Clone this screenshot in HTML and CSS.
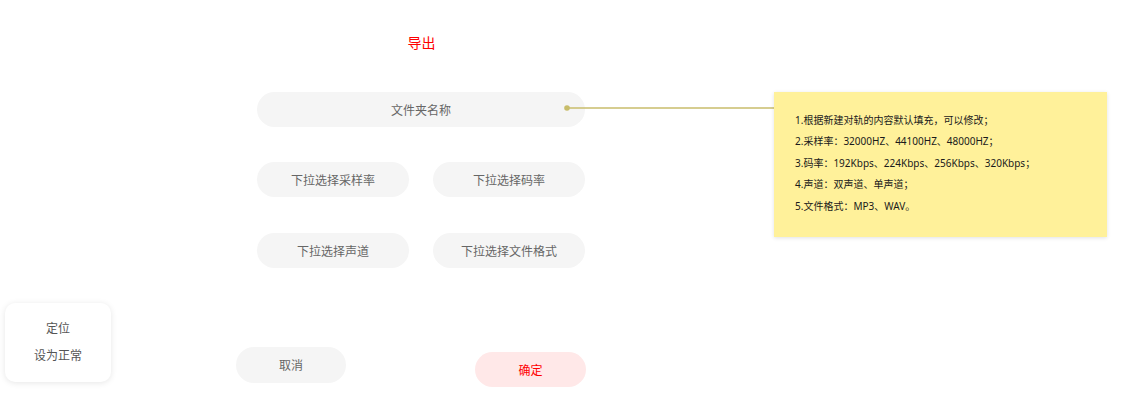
FILE: index.html
```html
<!DOCTYPE html>
<html lang="zh">
<head>
<meta charset="utf-8">
<title>导出</title>
<link rel="stylesheet" href="styles.css">
</head>
<body>
<div class="page">
  <div class="form">
    <div class="fields">
      <div class="title">导出</div>
      <div class="pill wide">文件夹名称</div>
      <div class="row row2">
        <div class="pill">下拉选择采样率</div>
        <div class="pill">下拉选择码率</div>
      </div>
      <div class="row row3">
        <div class="pill">下拉选择声道</div>
        <div class="pill">下拉选择文件格式</div>
      </div>
    </div>
    <div class="actions">
      <div class="btn cancel">取消</div>
      <div class="btn confirm">确定</div>
    </div>
  </div>

  <svg class="connector" width="222" height="10" viewBox="0 0 222 10">
    <line x1="4" y1="5" x2="217" y2="5" stroke="#c8bd6b" stroke-width="1.6"/>
    <circle cx="4" cy="5" r="2.8" fill="#c8bd6b"/>
    <circle cx="217" cy="5" r="2.8" fill="#c8bd6b"/>
  </svg>

  <div class="note">
    <p>1.根据新建对轨的内容默认填充，可以修改；</p>
    <p>2.采样率：32000HZ、44100HZ、48000HZ；</p>
    <p>3.码率：192Kbps、224Kbps、256Kbps、320Kbps；</p>
    <p>4.声道：双声道、单声道；</p>
    <p>5.文件格式：MP3、WAV。</p>
  </div>

  <div class="menu">
    <div class="menu-item">定位</div>
    <div class="menu-item">设为正常</div>
  </div>
</div>
</body>
</html>
```
FILE: styles.css
```css
* { box-sizing: border-box; }
html, body { margin: 0; padding: 0; background: #fff; }
body {
  font-family: "Noto Sans CJK SC", "Noto Sans", sans-serif;
  width: 1137px;
  height: 414px;
  overflow: hidden;
}
.page {
  position: relative;
  width: 1137px;
  height: 414px;
}
.form {
  margin-left: 236px;
  width: 350px;
  padding-top: 32px;
}
.fields {
  margin-left: 21px;
  width: 329px;
}
.title {
  height: 20px;
  line-height: 20px;
  font-size: 14px;
  color: #ff0000;
  text-align: center;
}
.pill {
  height: 35px;
  line-height: 35px;
  border-radius: 18px;
  background: #f5f5f5;
  color: #666;
  font-size: 12px;
  text-align: center;
  width: 152px;
}
.pill.wide {
  width: 328px;
  margin-top: 40px;
}
.row {
  display: flex;
  gap: 24px;
}
.row2 { margin-top: 35px; }
.row3 { margin-top: 36px; }
.actions {
  display: flex;
  justify-content: space-between;
  align-items: flex-start;
  margin-top: 79px;
}
.btn {
  height: 36px;
  line-height: 36px;
  border-radius: 18px;
  font-size: 12px;
  text-align: center;
}
.cancel {
  width: 110px;
  background: #f5f5f5;
  color: #666;
}
.confirm {
  width: 111px;
  height: 35px;
  line-height: 35px;
  margin-top: 5px;
  background: #ffe8e8;
  color: #ff0000;
}
.connector {
  position: absolute;
  left: 563px;
  top: 103px;
}
.note {
  position: absolute;
  left: 774px;
  top: 92px;
  width: 333px;
  height: 145px;
  background: #fff19a;
  box-shadow: 0 1px 4px rgba(0,0,0,0.12);
  padding: 18px 0 0 21px;
  font-family: "Noto Sans", "Noto Sans CJK SC", sans-serif;
  font-size: 10px;
  color: #1a1a1a;
}
.note p {
  margin: 0;
  line-height: 21.4px;
}
.menu {
  position: absolute;
  left: 5px;
  top: 303px;
  width: 106px;
  height: 79px;
  background: #fff;
  border-radius: 10px;
  box-shadow: 0 1px 6px rgba(0,0,0,0.1);
  padding-top: 11px;
}
.menu-item {
  line-height: 27px;
  font-size: 12px;
  color: #555;
  text-align: center;
}
```
